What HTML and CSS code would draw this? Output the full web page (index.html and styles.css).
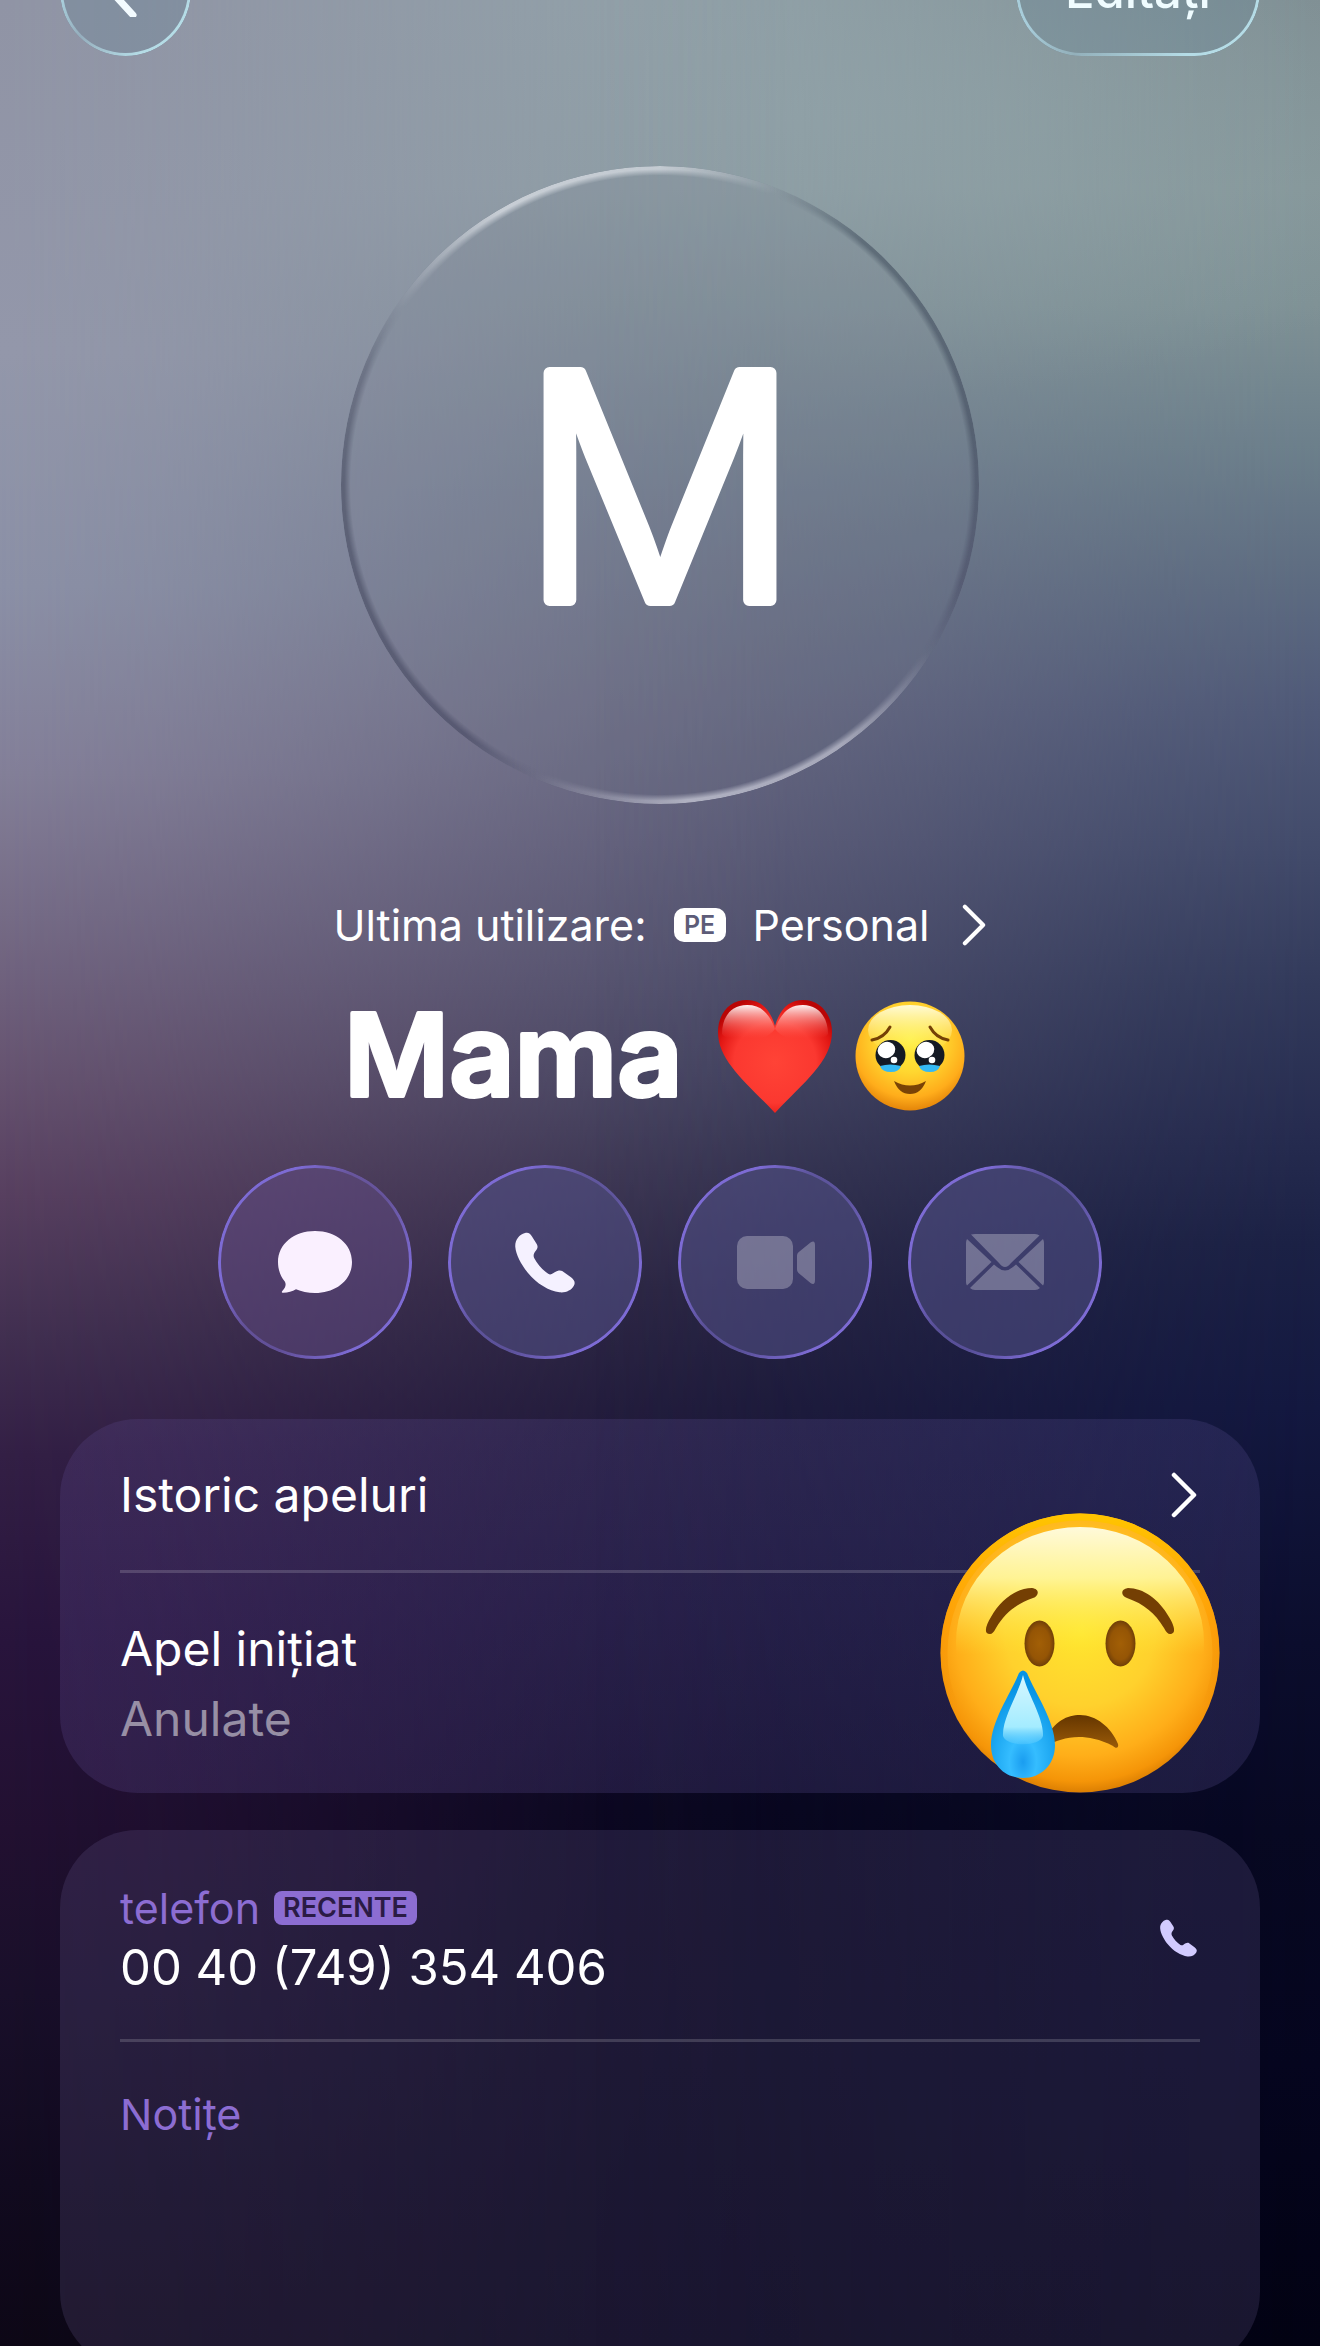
FILE: index.html
```html
<!DOCTYPE html>
<html lang="ro">
<head>
<meta charset="utf-8">
<meta name="viewport" content="width=device-width, initial-scale=1">
<title>Mama</title>
<link rel="stylesheet" href="styles.css">
</head>
<body>
<svg class="defs" width="0" height="0" aria-hidden="true">
  <defs>
    <symbol id="phone" viewBox="0 0 60 61">
      <path d="M10 1C13.500 0 15.300 1.800 17 4.500L21.700 12C23.200 14.500 22.600 16.500 20.800 18.800C18.600 21.600 18 23.700 19.300 26.300C22 31.800 27.800 38.200 33.200 41.800C35.200 43 36.500 42.300 38.500 41C41.500 39 44.500 37.500 47.200 39L56 45.300C59.800 48.200 60.300 50.800 59 53.500C56.500 58.500 50.500 61 44.500 60.300C34 59 21.500 51.500 13 41C6.500 33 1 23 0.300 15C-0.200 8.500 4 2.500 10 1Z" fill="currentColor"/>
    </symbol>
    <symbol id="chevron" viewBox="0 0 26 46">
      <path d="M3 3L23 23L3 43" fill="none" stroke="currentColor" stroke-width="4.500" stroke-linecap="round" stroke-linejoin="round"/>
    </symbol>
  </defs>
</svg>
<main class="page">
  <header class="topbar">
    <button class="glass back" type="button" aria-label="Înapoi">
      <svg width="30" height="52" viewBox="0 0 30 52" aria-hidden="true"><path d="M26 4L4 26L26 50" fill="none" stroke="currentColor" stroke-width="7" stroke-linecap="round" stroke-linejoin="round"/></svg>
    </button>
    <button class="glass edit" type="button">Editați</button>
  </header>

  <section class="profile">
    <div class="avatar">
      <svg class="initial" viewBox="0 0 280 280" aria-hidden="true"><text x="140" y="255" text-anchor="middle">M</text></svg>
    </div>
    <a class="line" href="#linie">
      <span>Ultima utilizare:</span>
      <span class="tag">PE</span>
      <span>Personal</span>
      <svg class="chevron small" aria-hidden="true"><use href="#chevron"/></svg>
    </a>
    <h1 class="name">
      <svg class="name-text" viewBox="0 0 340 120"><text x="0" y="100">Mama</text></svg>
      <svg class="heart" viewBox="0 0 114 114" role="img" aria-label="inimă roșie">
        <defs>
          <radialGradient id="heartFill" cx="0.500" cy="0.550" r="0.600">
            <stop offset="0" stop-color="#ff4336"/><stop offset="0.600" stop-color="#fb3830"/><stop offset="0.850" stop-color="#e11613"/><stop offset="1" stop-color="#b90505"/>
          </radialGradient>
          <linearGradient id="heartShine" x1="0" y1="0" x2="0" y2="1">
            <stop offset="0" stop-color="#fff" stop-opacity="0.950"/><stop offset="0.900" stop-color="#ff6a60" stop-opacity="0"/>
          </linearGradient>
        </defs>
        <path d="M57 27C52 9 42 1 29 1C11 1 0 15 0 33C0 62 28 83 57 114C86 83 114 62 114 33C114 15 102 1 85 1C72 1 62 9 57 27Z" fill="url(#heartFill)"/>
        <path d="M57 30C51 14 43 6 29 6C13 6 4 18 4 35C12 46 45 46 57 30Z" fill="url(#heartShine)"/>
        <path d="M57 30C63 14 71 6 85 6C100 6 110 18 110 35C102 46 69 46 57 30Z" fill="url(#heartShine)"/>
      </svg>
      <svg class="face" viewBox="0 0 110 110" role="img" aria-label="față cu lacrimi reținute">
        <defs>
          <radialGradient id="face" cx="0.500" cy="0.350" r="0.660">
            <stop offset="0" stop-color="#fff03e"/><stop offset="0.450" stop-color="#ffd730"/><stop offset="0.800" stop-color="#ffad1b"/><stop offset="1" stop-color="#e28208"/>
          </radialGradient>
          <linearGradient id="faceShine" x1="0" y1="0" x2="0" y2="1">
            <stop offset="0" stop-color="#fffbd8"/><stop offset="1" stop-color="#fff36a" stop-opacity="0"/>
          </linearGradient>
        </defs>
        <circle cx="55" cy="55" r="54.500" fill="url(#face)"/>
        <ellipse cx="55" cy="29" rx="42" ry="25" fill="url(#faceShine)"/>
        <g fill="none" stroke="#744006" stroke-width="3" stroke-linecap="round">
          <path d="M17 39Q29 37 35 26"/><path d="M93 39Q81 37 75 26"/>
        </g>
        <g fill="#141a24"><circle cx="35.500" cy="54" r="15"/><circle cx="74.500" cy="54" r="15"/></g>
        <g fill="#35b9f3"><path d="M25 65Q35 62 46 65Q44 71 36 71Q27 71 25 65Z"/><path d="M64 65Q74 62 85 65Q83 71 75 71Q66 71 64 65Z"/></g>
        <g fill="#fff"><ellipse cx="31.500" cy="49" rx="9" ry="8" transform="rotate(-25 31.500 49)"/><ellipse cx="70.500" cy="49" rx="9" ry="8" transform="rotate(-25 70.500 49)"/><circle cx="39" cy="59" r="3.300"/><circle cx="77" cy="59" r="3.300"/></g>
        <path d="M39 80Q55 89 71 80Q66 93 55 93Q44 93 39 80Z" fill="#7a4306"/>
      </svg>
    </h1>
    <nav class="actions" aria-label="Acțiuni">
      <button class="action warm" type="button" aria-label="Mesaj">
        <svg width="74" height="62" viewBox="0 0 74 62" fill="currentColor" aria-hidden="true"><path d="M37 0C58 0 74 13 74 31C74 49 58 62 37 62C29.500 62 23.500 60.500 18 58.300C14 60.500 9.500 62 4.500 61.800C3.600 61.500 3.600 60.600 4.300 59.900C7.500 56.500 8.500 53.500 6.800 50.500C2.500 45.500 0 38.500 0 31C0 13 16 0 37 0Z"/></svg>
      </button>
      <button class="action" type="button" aria-label="Apel">
        <svg width="60" height="61" aria-hidden="true"><use href="#phone"/></svg>
      </button>
      <button class="action" type="button" aria-label="Video" disabled>
        <svg width="80" height="53" viewBox="-2 0 80 53" fill="currentColor" aria-hidden="true"><rect width="56" height="53" rx="10"/><path d="M60 19.500Q60 17.500 61.500 16.300L73.500 6.500Q78 3.500 78 9V44Q78 50 73.500 47L61.500 37Q60 35.500 60 33.500Z"/></svg>
      </button>
      <button class="action" type="button" aria-label="E-mail" disabled>
        <svg width="78" height="56" viewBox="0 0 78 56" fill="currentColor" aria-hidden="true"><path d="M5 0.500Q7 0 9 0H69Q72 0 73.500 1.500L45 29Q39 37 33 29Z"/><path d="M1 5L25.500 28L1 51.500Q0 50 0 48V9Q0 7 1 5Z"/><path d="M77 5L52.500 28L77 51.500Q78 50 78 48V9Q78 7 77 5Z"/><path d="M28 30.500L31 33Q39 40 47 33L50 30.500L74 54Q72 56 69 56H9Q6 56 4 54Z"/></svg>
      </button>
    </nav>
  </section>

  <section class="card history">
    <a class="row heading" href="#istoric">
      <span>Istoric apeluri</span>
      <svg class="chevron" aria-hidden="true"><use href="#chevron"/></svg>
    </a>
    <div class="row call">
      <p>Apel inițiat</p>
      <p class="muted">Anulate</p>
    </div>
    <svg class="sticker" viewBox="0 0 280 280" role="img" aria-label="față plângând">
      <defs>
        <radialGradient id="cry" cx="0.500" cy="0.420" r="0.600">
          <stop offset="0" stop-color="#ffe62e"/><stop offset="0.450" stop-color="#ffd12d"/><stop offset="0.750" stop-color="#ffae19"/><stop offset="0.900" stop-color="#f59508"/><stop offset="1" stop-color="#cf7400"/>
        </radialGradient>
        <linearGradient id="cryRim" x1="0" y1="0" x2="0" y2="1">
          <stop offset="0" stop-color="#ffc400"/><stop offset="0.400" stop-color="#ff9a00" stop-opacity="0.600"/><stop offset="0.700" stop-color="#e58200" stop-opacity="0"/>
        </linearGradient>
        <linearGradient id="cryShine" x1="0" y1="0" x2="0" y2="1">
          <stop offset="0" stop-color="#fffadb"/><stop offset="0.220" stop-color="#fff8a0" stop-opacity="0.900"/><stop offset="0.550" stop-color="#ffee36" stop-opacity="0"/>
        </linearGradient>
        <radialGradient id="eye"><stop offset="0" stop-color="#a25f06"/><stop offset="0.700" stop-color="#955505"/><stop offset="1" stop-color="#703f08"/></radialGradient>
        <linearGradient id="mouth" x1="0" y1="0" x2="0" y2="1"><stop offset="0" stop-color="#653600"/><stop offset="1" stop-color="#995a08"/></linearGradient>
        <radialGradient id="tear" cx="0.500" cy="0.850" r="0.700"><stop offset="0" stop-color="#1a9df0"/><stop offset="0.300" stop-color="#35bdff"/><stop offset="1" stop-color="#0793e4"/></radialGradient>
        <linearGradient id="tearShine" x1="0" y1="0" x2="0" y2="1"><stop offset="0" stop-color="#d7f7ff"/><stop offset="0.750" stop-color="#a4ecff"/><stop offset="1" stop-color="#6fd4ff" stop-opacity="0.300"/></linearGradient>
      </defs>
      <circle cx="140" cy="140" r="139.500" fill="url(#cry)"/>
      <circle cx="140" cy="140" r="136" fill="none" stroke="url(#cryRim)" stroke-width="7"/>
      <ellipse cx="140" cy="130" rx="124" ry="116" fill="url(#cryShine)"/>
      <path d="M50 121C43 121 46 112 51 104C61 86 77 75 92 75C100 76 99 83 93 85C76 91 65 100 56 115Q53 121 50 121Z" fill="#743f03"/>
      <path d="M230 121C237 121 234 112 229 104C219 86 203 75 188 75C180 76 181 83 187 85C204 91 215 100 224 115Q227 121 230 121Z" fill="#743f03"/>
      <ellipse cx="99.500" cy="130.500" rx="15" ry="23" fill="url(#eye)"/>
      <ellipse cx="180.500" cy="130.500" rx="15" ry="23" fill="url(#eye)"/>
      <path d="M105 226C115 208 127 202 140 202C156 202 171 214 178 231C179 235 176 236 173 233C160 226 148 224 139 224C126 224 115 228 106 233Z" fill="url(#mouth)"/>
      <path d="M79 160Q83 155 87 160C95 180 115 208 115 232C115 252 101 265 83 265C65 265 51 252 51 232C51 208 71 180 79 160Z" fill="url(#tear)"/>
      <path d="M83 162C87 180 104 205 103 223C100 234 66 234 63 223C62 205 79 180 83 162Z" fill="url(#tearShine)"/>
    </svg>
  </section>

  <section class="card details">
    <div class="row phone">
      <div>
        <p class="label">telefon <span class="recent">RECENTE</span></p>
        <p><a class="number" href="tel:0040749354406">00 40 (749) 354 406</a></p>
      </div>
      <button class="dial" type="button" aria-label="Apelează"><svg width="37" height="38" aria-hidden="true"><use href="#phone"/></svg></button>
    </div>
    <div class="row notes">
      <label class="label" for="notite">Notițe</label>
      <textarea id="notite"></textarea>
    </div>
  </section>
</main>
</body>
</html>
```
FILE: styles.css
```css
* { box-sizing: border-box; }

body {
  margin: 0;
  background: #03031a;
  color: #fff;
  font-family: Inter, "Liberation Sans", sans-serif;
  font-size: 48px;
  line-height: 60px;
}

p, h1 { margin: 0; }
a { color: inherit; text-decoration: none; }
svg { display: block; flex: none; }
.defs { position: absolute; }

button {
  padding: 0;
  border: 0;
  background: none;
  color: inherit;
  font: inherit;
}

.page {
  position: relative;
  isolation: isolate;
  display: flex;
  flex-direction: column;
  height: 100vh;
  padding: 0 60px;
  overflow: hidden;
  background: linear-gradient(#92a2a9 0%, #8f9fa6 8%, #85949d 13%, #757f91 21%, #6b6c84 30%, #605f7a 36%, #555470 41%, #474662 46%, #3a3753 50%, #2a2643 55%, #201c3b 60%, #151131 68%, #09071f 77%, #060519 88%, #030214 100%);
}

/* The left and right colour columns fade into the centre one. */
.page::before,
.page::after {
  content: "";
  position: absolute;
  inset: 0;
  z-index: -1;
}

.page::before {
  background: linear-gradient(#9094a5 0%, #9397aa 15%, #8b90a6 25%, #837f98 33%, #756b86 39%, #65526f 46%, #573f5f 51%, #412f50 57%, #331f45 62%, #28143c 70%, #221031 78%, #190f2a 85%, #110a1f 93%, #0d0716 100%);
  mask-image: linear-gradient(to right, #000, rgba(0, 0, 0, 0.85) 12%, rgba(0, 0, 0, 0.5) 30%, rgba(0, 0, 0, 0.15) 46%, transparent 60%);
}

.page::after {
  background:
    radial-gradient(60% 12% at 60% 5%, rgba(144, 164, 168, 0.8), rgba(144, 164, 168, 0)),
    linear-gradient(#7d8c91 0%, #849598 8%, #7e9195 13%, #6c7f8b 19%, #5f6e82 24%, #505a78 30%, #424b6b 36%, #323a5b 42%, #262c50 48%, #1b2145 53%, #131840 60%, #0b0d2d 70%, #070822 78%, #05051f 88%, #020213 100%);
  mask-image: linear-gradient(to left, #000, rgba(0, 0, 0, 0.85) 12%, rgba(0, 0, 0, 0.5) 28%, rgba(0, 0, 0, 0.15) 44%, transparent 55%);
}

.topbar {
  display: flex;
  justify-content: space-between;
  margin-top: -75px;
}

.glass {
  position: relative;
  display: flex;
  align-items: center;
  justify-content: center;
  height: 131px;
  border-radius: 66px;
  background: rgba(100, 130, 145, 0.3);
}

.back { width: 131px; padding-right: 8px; color: #f3fbff; }
.edit { width: 244px; color: #effcff; font-size: 49px; font-weight: 500; }

/* Thin light rim, bright at two opposite corners. */
.glass::before,
.action::before {
  content: "";
  position: absolute;
  inset: 0;
  padding: 3px;
  border-radius: inherit;
  background: linear-gradient(135deg, #a8cdda, #a8cdda 30%, rgba(168, 205, 218, 0.5) 50%, #b5dce6 80%);
  mask: linear-gradient(#000 0 0) content-box exclude, linear-gradient(#000 0 0);
}

.profile {
  display: flex;
  flex-direction: column;
  align-items: center;
}

.avatar {
  position: relative;
  display: flex;
  align-items: center;
  justify-content: center;
  width: 638px;
  height: 638px;
  margin-top: 110px;
  border-radius: 50%;
  background: rgba(112, 118, 138, 0.16);
}

.avatar::before {
  content: "";
  position: absolute;
  inset: 0;
  border-radius: 50%;
  background: conic-gradient(rgba(215, 220, 226, 0.75) 0deg, rgba(215, 220, 226, 0) 22deg, rgba(70, 84, 98, 0.6) 40deg, rgba(70, 80, 98, 0.65) 80deg, rgba(70, 72, 98, 0.5) 108deg, rgba(190, 190, 205, 0) 122deg, rgba(195, 196, 210, 0.7) 145deg, rgba(195, 196, 210, 0.8) 175deg, rgba(190, 190, 205, 0) 203deg, rgba(70, 72, 98, 0.6) 218deg, rgba(75, 80, 100, 0.65) 270deg, rgba(75, 80, 100, 0.4) 292deg, rgba(215, 220, 226, 0) 304deg, rgba(215, 220, 226, 0.8) 330deg, rgba(215, 220, 226, 0.75) 360deg);
  mask-image: radial-gradient(closest-side, transparent 97%, #000 99%);
}

.initial { width: 280px; height: 280px; overflow: visible; }

.initial text,
.name-text text {
  fill: #fff;
  stroke: #fff;
  stroke-linejoin: round;
}

.initial text { font-size: 312px; font-weight: 350; stroke-width: 12px; }

.line {
  display: flex;
  align-items: center;
  gap: 27px;
  height: 54px;
  margin-top: 94px;
  font-size: 43px;
}

.tag {
  width: 52px;
  height: 34px;
  border-radius: 10px;
  background: #fff;
  color: #5d5c78;
  font-size: 25px;
  font-weight: 600;
  line-height: 34px;
  text-align: center;
}

.chevron { width: 26px; height: 46px; margin-right: 3px; }
.chevron.small { width: 24px; height: 42px; margin: 0 0 0 6px; }

.name {
  display: flex;
  align-items: center;
  height: 120px;
  margin-top: 44px;
  padding-right: 12px;
}

.name-text { width: 340px; height: 120px; overflow: visible; }
.name-text text { font-size: 114px; font-weight: 600; stroke-width: 4px; }
.heart { width: 114px; height: 114px; margin: 0 23px 0 34px; }
.face { width: 110px; height: 110px; }

.actions {
  display: flex;
  gap: 36px;
  margin-top: 49px;
}

.action {
  position: relative;
  display: flex;
  align-items: center;
  justify-content: center;
  width: 194px;
  height: 194px;
  border-radius: 50%;
  background: rgba(84, 82, 138, 0.55);
  color: #f5f1ff;
}

.action.warm { background: rgba(98, 76, 134, 0.5); color: #faf0ff; }
.action:disabled { color: rgba(255, 255, 255, 0.27); }

.action::before {
  background: linear-gradient(125deg, #7d6bd4 25%, rgba(125, 107, 212, 0.45) 42%, rgba(125, 107, 212, 0.45) 58%, #7d6bd4 80%);
}

.card {
  position: relative;
  flex: none;
  padding: 0 60px;
  border-radius: 78px;
  background: linear-gradient(to right, rgba(92, 72, 140, 0.27), rgba(84, 76, 140, 0.27));
}

.history { margin-top: 60px; }

.details {
  flex: 1;
  display: flex;
  flex-direction: column;
  margin: 37px 0 -24px;
  background: rgba(108, 94, 150, 0.22);
}

.row + .row { border-top: 3px solid rgba(255, 255, 255, 0.16); }

.heading {
  display: flex;
  align-items: center;
  justify-content: space-between;
  height: 151px;
}

.call { padding: 41px 0 39px; line-height: 70px; }
.muted { color: rgba(255, 255, 255, 0.5); }

.sticker {
  position: absolute;
  right: 40px;
  bottom: 0;
  width: 280px;
  height: 280px;
}

.phone {
  display: flex;
  justify-content: space-between;
  align-items: center;
  padding: 48px 0 41px;
}

.label {
  display: flex;
  align-items: center;
  gap: 14px;
  color: #8c6dd2;
  font-size: 43px;
}

.number { font-size: 49px; }

.recent {
  padding: 0 9px;
  border-radius: 8px;
  background: #8c6dd2;
  color: #2b1b45;
  font-size: 27px;
  font-weight: 600;
  line-height: 34px;
}

.dial { margin-right: 3px; color: #d2cbff; }

.notes {
  flex: 1;
  display: flex;
  flex-direction: column;
  padding-top: 42px;
}

.notes textarea {
  flex: 1;
  width: 100%;
  padding: 0;
  border: 0;
  background: none;
  color: inherit;
  font: inherit;
  resize: none;
}
```
